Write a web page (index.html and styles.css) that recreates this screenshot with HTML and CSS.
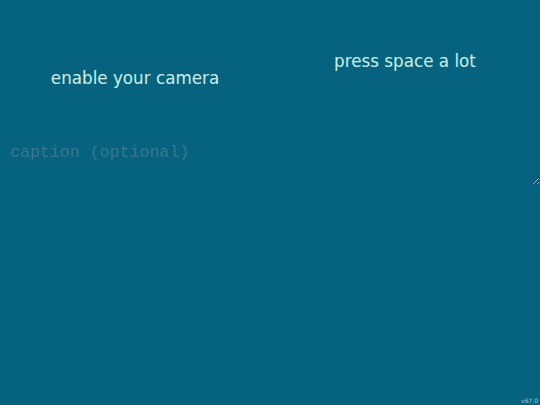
FILE: index.html
```html
<!DOCTYPE html>
<html>
<head>
<meta charset="utf-8">
<link rel="stylesheet" href="styles.css">
</head>
<body>
<div class="top">
  <div class="camera"><span class="msg">enable your camera</span></div>
  <div class="side"><span class="msg">press space a lot</span></div>
</div>
<textarea class="caption" placeholder="caption (optional)"></textarea>
<div class="version">v67.0</div>
</body>
</html>
```
FILE: styles.css
```css
html, body {
  margin: 0;
  padding: 0;
  height: 100%;
  background: #056380;
  overflow: hidden;
}
body {
  font-family: "DejaVu Sans", sans-serif;
  color: #cdeee2;
  position: relative;
}
.top {
  display: flex;
}
.camera, .side {
  width: 270px;
  display: flex;
  justify-content: center;
}
.camera {
  padding-top: 68px;
}
.side {
  padding-top: 51px;
}
.msg {
  font-size: 16.75px;
  line-height: 20px;
}
.caption {
  display: block;
  box-sizing: border-box;
  margin: 47px 0 0 0;
  width: 540px;
  height: 50px;
  padding: 8px 10px;
  border: none;
  outline: none;
  background: transparent;
  font-family: "Liberation Mono", monospace;
  font-size: 16.6px;
  color: #cdeee2;
  resize: both;
}
.caption::placeholder {
  color: #3a7688;
}
.version {
  position: absolute;
  right: 2px;
  bottom: 1px;
  font-size: 6px;
  color: #a9c9d3;
}
```
